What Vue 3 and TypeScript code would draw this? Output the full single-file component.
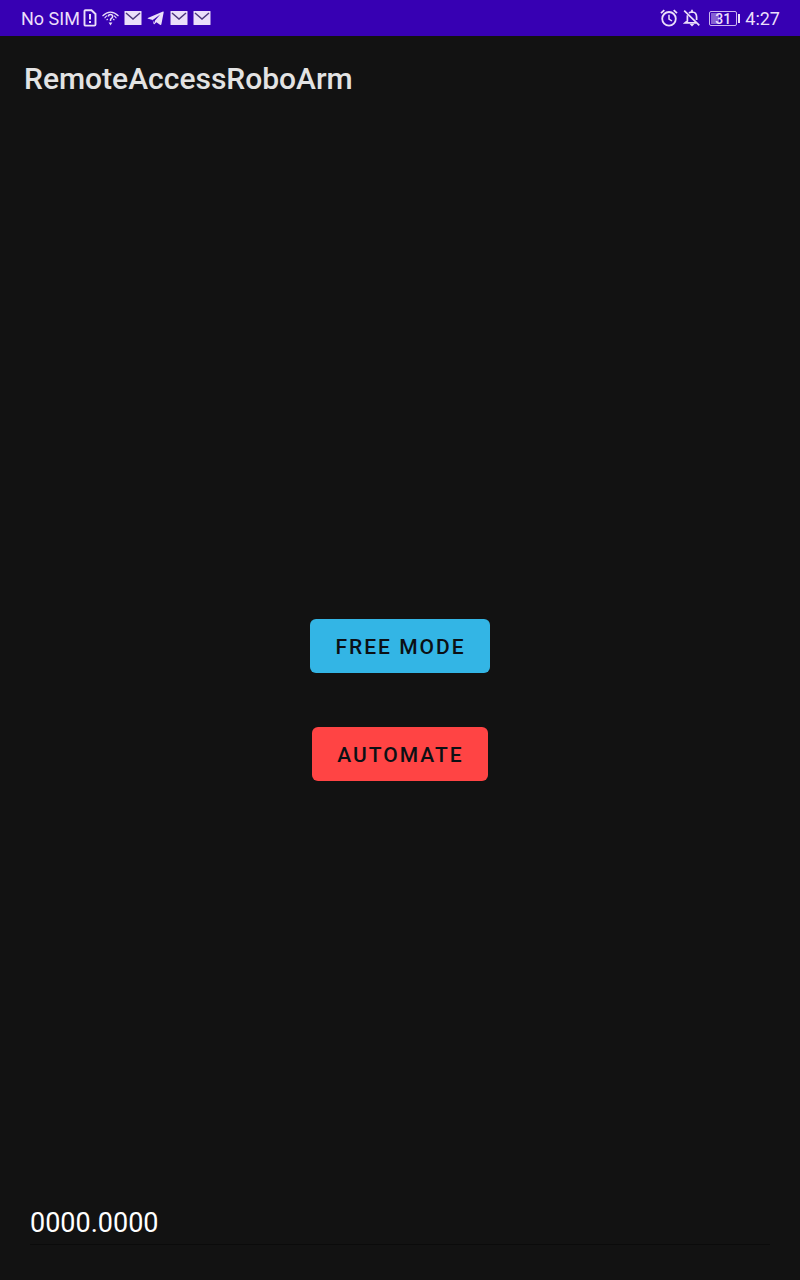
<script setup lang="ts">
import { ref } from 'vue'

const carrier = 'No SIM'
const clock = '4:27'
const battery = 31
const title = 'RemoteAccessRoboArm'
const reading = ref('0000.0000')
</script>

<template>
  <div class="screen">
    <div class="status">
      <div class="group left">
        <span>{{ carrier }}</span>
        <svg class="sim" width="14" height="18" viewBox="0 0 14 18" fill="none" stroke="currentColor" aria-hidden="true">
          <path d="M2.5 1.2H8.5L12.5 5V15.4Q12.5 16.6 11.3 16.6H2.7Q1.5 16.6 1.5 15.4V2.3Q1.5 1.2 2.5 1.2Z" stroke-width="1.9" />
          <path d="M7 5V10.5M7 12V14" stroke-width="2" />
        </svg>
        <svg width="17" height="18" viewBox="0 0 17 18" fill="none" stroke="currentColor" stroke-width="1.1" aria-hidden="true">
          <path d="M0.5 7Q8.5 -0.6 16.5 7M2.6 9.2Q3.9 7.4 5.2 6.6M14.4 9.2Q13.1 7.4 11.8 6.6M4.6 11.2L5.8 10M12.4 11.2L11.2 10" />
          <path d="M6.4 7.6Q6.4 5.6 8.5 5.6T10.6 7.4Q10.6 8.6 9.4 9.4T8.5 12" stroke-width="1.5" />
          <path d="M6.6 13.4H10.4L8.5 16.4Z" fill="currentColor" stroke="none" />
        </svg>
        <svg width="18" height="16" viewBox="0 0 18 16" aria-hidden="true">
          <rect x="0.5" y="1" width="17" height="14" rx="0.6" fill="currentColor" />
          <path d="M2 3L9 9L16 3" fill="none" stroke="#4c377d" stroke-width="1.5" />
        </svg>
        <svg width="18" height="16" viewBox="0 0 18 16" aria-hidden="true">
          <path d="M0.8 8L16 1.6Q16.8 1.4 16.7 2.2L14.4 14.2Q14.1 15.4 13 14.7L9.4 12.2L7.6 14Q6.7 14.6 6.5 13.4L5.7 9.9L1.2 8.8Q0.2 8.4 0.8 8Z" fill="currentColor" />
          <path d="M5.7 9.9L13.2 4.6L8 10.6L7.2 13.2Z" fill="#3700b3" />
        </svg>
        <svg v-for="n in 2" :key="n" width="18" height="16" viewBox="0 0 18 16" aria-hidden="true">
          <rect x="0.5" y="1" width="17" height="14" rx="0.6" fill="currentColor" />
          <path d="M2 3L9 9L16 3" fill="none" stroke="#4c377d" stroke-width="1.5" />
        </svg>
      </div>
      <div class="group right">
        <svg width="18" height="18" viewBox="0 0 18 18" fill="none" stroke="currentColor" stroke-width="1.8" aria-hidden="true">
          <circle cx="9" cy="9.8" r="6.8" />
          <path d="M9 5.8V10L12 12" stroke-width="1.5" />
          <path d="M1 4.2L4.3 1.2M17 4.2L13.7 1.2" />
        </svg>
        <svg width="18" height="18" viewBox="0 0 18 18" fill="none" stroke="currentColor" stroke-width="1.7" aria-hidden="true">
          <path d="M6 4Q7.2 3 9 3Q13.6 3.2 13.6 8V11M4.4 6.2V12L2.2 13.8H13" />
          <path d="M9 0.8V3M1.2 1.6L16.3 16.4" />
          <path d="M6.6 15H11.4L9 17.5Z" fill="currentColor" stroke="none" />
        </svg>
        <span class="battery">
          <span class="fill" :style="{ width: battery + '%' }"></span>
          <span class="level">{{ battery }}</span>
        </span>
        <span class="clock">{{ clock }}</span>
      </div>
    </div>
    <header class="appbar"><h1>{{ title }}</h1></header>
    <main class="content">
      <div class="actions">
        <button type="button" class="free">FREE MODE</button>
        <button type="button" class="auto">AUTOMATE</button>
      </div>
      <div class="field">
        <input v-model="reading" type="text" aria-label="Coordinates" />
      </div>
    </main>
  </div>
</template>

<style>
body {
  margin: 0;
  background: #121212;
}
</style>

<style scoped>
.screen {
  display: flex;
  flex-direction: column;
  min-height: 100vh;
  background: #121212;
  font-family: Roboto, "Liberation Sans", sans-serif;
}
.status {
  box-sizing: border-box;
  display: flex;
  justify-content: space-between;
  align-items: center;
  height: 36px;
  padding: 0 20px 0 21px;
  background: #3700b3;
  color: #ebdffa;
  font-size: 18px;
  line-height: 20px;
}
.group {
  display: flex;
  align-items: center;
  gap: 5px;
}
.group > span:not(.battery) {
  padding-top: 2px;
}
.group svg {
  display: block;
  flex: none;
}
.left .sim {
  margin-left: -2px;
}
.battery {
  position: relative;
  box-sizing: border-box;
  width: 28px;
  height: 15px;
  margin: 0 3px;
  padding: 1px;
  border: 1px solid #cdb9ee;
  border-radius: 2px;
}
.battery::after {
  content: "";
  position: absolute;
  top: 2px;
  right: -4px;
  width: 2px;
  height: 9px;
  background: currentColor;
}
.fill {
  display: block;
  height: 100%;
  background: #8560d2;
}
.level {
  position: absolute;
  inset: 0;
  font-size: 14px;
  font-weight: 500;
  line-height: 15px;
  text-align: center;
}
.appbar {
  box-sizing: border-box;
  display: flex;
  align-items: center;
  height: 84px;
  padding: 2px 24px 0;
}
h1 {
  margin: 0;
  color: #e3e3e3;
  font-size: 30px;
  font-weight: 500;
  line-height: 36px;
}
.content {
  flex: 1;
  display: grid;
  grid-template-rows: 1fr auto 1fr;
}
.actions {
  grid-row: 2;
  display: flex;
  flex-direction: column;
  align-items: center;
  gap: 54px;
}
button {
  height: 54px;
  padding: 2px 24px 0 25px;
  border: 0;
  border-radius: 6px;
  color: #0c1014;
  font-family: inherit;
  font-size: 21px;
  font-weight: 500;
  letter-spacing: 2px;
}
.free {
  background: #33b5e5;
}
.auto {
  background: #ff4444;
}
.field {
  grid-row: 3;
  align-self: end;
  padding: 0 30px 35px;
}
input {
  display: block;
  box-sizing: border-box;
  width: 100%;
  height: 45px;
  padding: 2px 0 0;
  border: 0;
  border-bottom: 1px solid #0b0b0b;
  outline: 0;
  background: transparent;
  color: #ffffff;
  font-family: inherit;
  font-size: 27px;
  line-height: 32px;
}
</style>
